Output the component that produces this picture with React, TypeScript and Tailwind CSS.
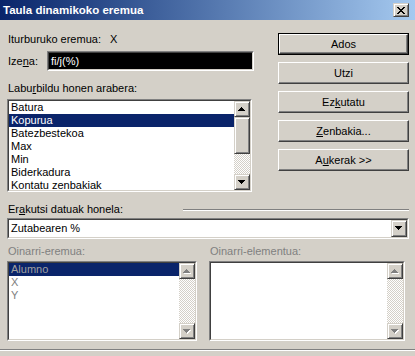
import React from 'react';

const raised =
  'border border-t-white border-l-white border-r-[#404040] border-b-[#404040] shadow-[inset_-1px_-1px_0_#808080] bg-[#d4d0c8]';
const scrollBtn =
  'border border-t-[#d4d0c8] border-l-[#d4d0c8] border-r-[#404040] border-b-[#404040] shadow-[inset_1px_1px_0_#fff,inset_-1px_-1px_0_#808080] bg-[#d4d0c8]';
const checker = 'bg-[repeating-conic-gradient(#fff_0_25%,#d4d0c8_0_50%)] bg-[length:2px_2px]';

function Arrow({ dir, disabled }: { dir: 'up' | 'down'; disabled?: boolean }) {
  const d = dir === 'up' ? 'M3 0h1v1h1v1h1v1h1v1H0V3h1V2h1V1h1z' : 'M0 0h7v1H6v1H5v1H4v1H3V3H2V2H1V1H0z';
  return (
    <svg width="8" height="5" viewBox="0 0 8 5" shapeRendering="crispEdges">
      {disabled && <path d={d} fill="#fff" transform="translate(1 1)" />}
      <path d={d} fill={disabled ? '#808080' : '#000'} />
    </svg>
  );
}

function Sunken({ className, inner, children }: { className: string; inner?: string; children?: React.ReactNode }) {
  return (
    <div className={`border border-t-[#808080] border-l-[#808080] border-r-white border-b-white ${className}`}>
      <div className={`h-full border border-t-[#404040] border-l-[#404040] border-r-[#d4d0c8] border-b-[#d4d0c8] ${inner ?? 'bg-white'}`}>
        {children}
      </div>
    </div>
  );
}

function ScrollBar({ thumb, disabled }: { thumb?: boolean; disabled?: boolean }) {
  return (
    <div className="w-[16px] h-full flex flex-col">
      <div className={`h-[16px] flex items-center justify-center ${scrollBtn}`}>
        <Arrow dir="up" disabled={disabled} />
      </div>
      {thumb && <div className={`h-[37px] ${scrollBtn}`} />}
      <div className={`flex-1 ${checker}`} />
      <div className={`h-[16px] flex items-center justify-center ${scrollBtn}`}>
        <Arrow dir="down" disabled={disabled} />
      </div>
    </div>
  );
}

function CloseGlyph() {
  const rects = [
    [0, 0, 2], [6, 0, 2], [1, 1, 2], [5, 1, 2], [2, 2, 4], [3, 3, 2], [2, 4, 4], [1, 5, 2], [5, 5, 2], [0, 6, 2], [6, 6, 2],
  ];
  return (
    <svg width="8" height="7" viewBox="0 0 8 7" shapeRendering="crispEdges">
      {rects.map(([x, y, w], i) => (
        <rect key={i} x={x} y={y} width={w} height={1} fill="#000" />
      ))}
    </svg>
  );
}

function Button({ children, primary }: { children: React.ReactNode; primary?: boolean }) {
  const face = (
    <div className={`h-full flex items-center justify-center ${raised}`}>
      <span>{children}</span>
    </div>
  );
  if (primary) return <div className="h-[22px] border border-black">{face}</div>;
  return <div className="h-[22px]">{face}</div>;
}

const summary = ['Batura', 'Kopurua', 'Batezbestekoa', 'Max', 'Min', 'Biderkadura', 'Kontatu zenbakiak'];

export default function App() {
  return (
    <div className="w-[415px] h-[356px] overflow-hidden bg-[#d4d0c8] text-[11px] leading-[13px] text-black font-['Liberation_Sans',Arial,sans-serif] flex flex-col">
      {/* title bar */}
      <div className="h-[20px] shrink-0 flex items-center justify-between pl-[3px] pr-[6px] bg-gradient-to-r from-[#0a246a] to-[#a6caf0]">
        <span className="text-white font-bold text-[11.5px]">Taula dinamikoko eremua</span>
        <div className={`w-[16px] h-[14px] flex items-center justify-center ${scrollBtn}`}>
          <CloseGlyph />
        </div>
      </div>

      {/* upper part */}
      <div className="flex pl-[7px] pr-[6px]">
        <div className="w-[247px] flex flex-col">
          <div className="mt-[13px] h-[13px] flex pl-[1px]">
            <span className="w-[102px]">Iturburuko eremua:</span>
            <span>X</span>
          </div>
          <div className="mt-[5px] h-[20px] flex items-center">
            <span className="w-[40px] pl-[1px]">
              Ize<u>n</u>a:
            </span>
            <Sunken className="flex-1 h-[20px]" inner="bg-black">
              <div className="h-full flex items-center pl-[2px] text-white">fi/j(%)</div>
            </Sunken>
          </div>
          <div className="mt-[11px] h-[13px] pl-[1px]">
            Labu<u>r</u>bildu honen arabera:
          </div>
          <Sunken className="mt-[4px] w-[245px] h-[93px]">
            <div className="h-full flex">
              <div className="flex-1 overflow-hidden">
                {summary.map((s) => (
                  <div
                    key={s}
                    className={`h-[13px] pl-[2px] ${s === 'Kopurua' ? 'bg-[#0a246a] text-white' : ''}`}
                  >
                    {s}
                  </div>
                ))}
              </div>
              <ScrollBar thumb />
            </div>
          </Sunken>
        </div>

        <div className="ml-auto w-[131px] mt-[13px] flex flex-col gap-[7px]">
          <Button primary>Ados</Button>
          <Button>Utzi</Button>
          <Button>
            Ez<u>k</u>utatu
          </Button>
          <Button>
            <u>Z</u>enbakia...
          </Button>
          <Button>
            A<u>u</u>kerak &gt;&gt;
          </Button>
        </div>
      </div>

      {/* show data as */}
      <div className="mt-[11px] h-[13px] flex items-center pl-[8px] pr-[6px]">
        <span className="w-[175px]">
          Er<u>a</u>kutsi datuak honela:
        </span>
        <div className="flex-1 h-[2px] border-t border-t-[#808080] border-b border-b-white" />
      </div>
      <div className="mt-[2px] pl-[7px] pr-[6px]">
        <Sunken className="h-[21px]">
          <div className="h-full flex items-center">
            <span className="flex-1 pl-[2px]">Zutabearen %</span>
            <div className={`w-[16px] h-[17px] flex items-center justify-center ${scrollBtn}`}>
              <Arrow dir="down" />
            </div>
          </div>
        </Sunken>
      </div>

      {/* base field / item */}
      <div className="mt-[6px] flex pl-[7px] gap-[12px] text-[#808080]">
        <div className="w-[190px] flex flex-col">
          <div className="h-[13px] pl-[1px]">Oinarri-eremua:</div>
          <Sunken className="mt-[3px] h-[80px]">
            <div className="h-full flex">
              <div className="flex-1">
                <div className="h-[13px] pl-[2px] bg-[#0a246a] text-[#a0a0a0]">Alumno</div>
                <div className="h-[13px] pl-[2px]">X</div>
                <div className="h-[13px] pl-[2px]">Y</div>
              </div>
              <ScrollBar disabled />
            </div>
          </Sunken>
        </div>
        <div className="w-[196px] flex flex-col">
          <div className="h-[13px] pl-[1px]">Oinarri-elementua:</div>
          <Sunken className="mt-[3px] h-[80px]">
            <div className="h-full flex">
              <div className="flex-1" />
              <ScrollBar disabled />
            </div>
          </Sunken>
        </div>
      </div>
      <div className="mt-[8px] h-[2px] border-t border-t-[#808080] border-b border-b-white" />
    </div>
  );
}
